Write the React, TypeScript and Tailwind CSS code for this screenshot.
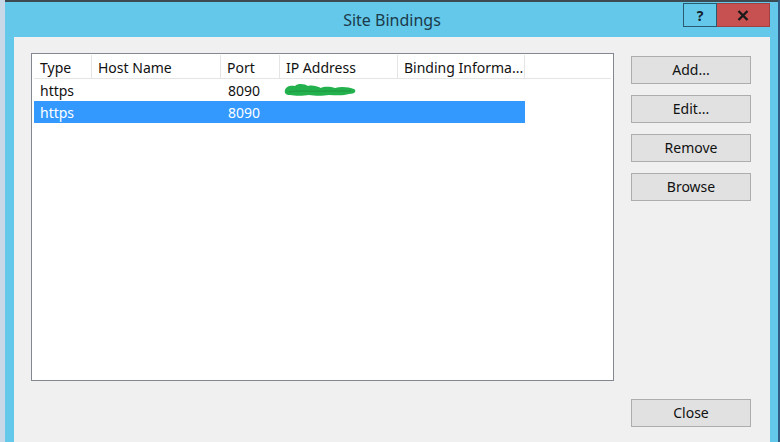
import React from 'react';

const font = { fontFamily: '"Noto Sans", "Open Sans", sans-serif' };

const columns = [
  { label: 'Type', w: 'w-[58px]' },
  { label: 'Host Name', w: 'w-[129px]' },
  { label: 'Port', w: 'w-[59px]' },
  { label: 'IP Address', w: 'w-[118px]' },
  { label: 'Binding Informa...', w: 'w-[127px]' },
];

const DialogButton: React.FC<{ label: string }> = ({ label }) => (
  <button className="w-[120px] h-[28px] bg-[#e1e1e1] border border-[#adadad] text-[14px] text-[#111] leading-none">
    {label}
  </button>
);

// green marker smudge hiding the IP address
const Scribble: React.FC = () => (
  <svg width="74" height="14" viewBox="0 0 74 14">
    <path
      d="M2 7 C3 3 8 2 12 3 C15 0 22 1 25 3 C29 2 34 3 38 5 C42 3 48 4 52 5 C58 3 66 4 71 6 C74 8 72 11 66 11 C60 13 52 12 46 12 C40 13 32 13 26 12 C20 13 12 13 7 12 C3 12 1 10 2 7 Z"
      fill="#22b14c"
    />
    <path d="M6 9 C16 7 30 9 44 8 C54 8 62 8 68 8" stroke="#1f9e43" strokeWidth="1.5" fill="none" />
  </svg>
);

const App: React.FC = () => {
  return (
    <div className="w-[780px] h-[442px] flex overflow-hidden" style={font}>
      <div className="w-[5px] bg-[#c9d8e6]" />

      <div className="flex-1 flex flex-col bg-[#63c8e9] border-t-2 border-[#3d4a52] pl-[9px] pr-[8px]">
        {/* Title bar */}
        <div className="h-[35px] grid grid-cols-[1fr_auto_1fr]">
          <div />
          <div className="pt-[6px] text-[16px] text-[#1b3a4b]">Site Bindings</div>
          <div className="flex justify-end pt-[1px]">
            <div className="w-[34px] h-[24px] border border-[#2a5a70] flex items-center justify-center text-[14px] font-bold text-[#14202c]">
              ?
            </div>
            <div className="w-[53px] h-[24px] bg-[#c75050] border-y border-r border-[#a04040] flex items-center justify-center">
              <svg width="12" height="11" viewBox="0 0 12 11">
                <path d="M1.5 1 L10.5 10 M10.5 1 L1.5 10" stroke="#1a1a1a" strokeWidth="2.4" />
              </svg>
            </div>
          </div>
        </div>

        {/* Content */}
        <div className="flex-1 bg-[#f0f0f0] flex pl-[17px] pt-[16px] pr-[18px] pb-[15px]">
          <div className="w-[583px] h-[328px] border border-[#828790] bg-white p-[2px] pt-[1px]">
            <div className="flex h-[24px] border-b border-[#e5e5e5] text-[14px] text-[#111]">
              {columns.map((c) => (
                <div key={c.label} className={`${c.w} border-r border-[#e5e5e5] pl-[6px] pt-[2px] flex items-center`}>
                  {c.label}
                </div>
              ))}
              <div className="flex-1" />
            </div>
            <div className="flex h-[22px] text-[14px] text-[#111]">
              <div className="w-[58px] pl-[6px] flex items-center">https</div>
              <div className="w-[129px]" />
              <div className="w-[59px] pl-[7px] flex items-center">8090</div>
              <div className="w-[118px] pl-[3px] flex items-center">
                <Scribble />
              </div>
            </div>
            <div className="flex h-[22px] w-[491px] bg-[#3399ff] text-[14px] text-white">
              <div className="w-[58px] pl-[6px] flex items-center">https</div>
              <div className="w-[129px]" />
              <div className="w-[59px] pl-[7px] flex items-center">8090</div>
            </div>
          </div>

          <div className="ml-[17px] pt-[3px] flex flex-col justify-between">
            <div className="flex flex-col gap-[11px]">
              <DialogButton label="Add..." />
              <DialogButton label="Edit..." />
              <DialogButton label="Remove" />
              <DialogButton label="Browse" />
            </div>
            <DialogButton label="Close" />
          </div>
        </div>
      </div>

      <div className="w-[2px] bg-[#2f5d86]" />
    </div>
  );
};

export default App;
